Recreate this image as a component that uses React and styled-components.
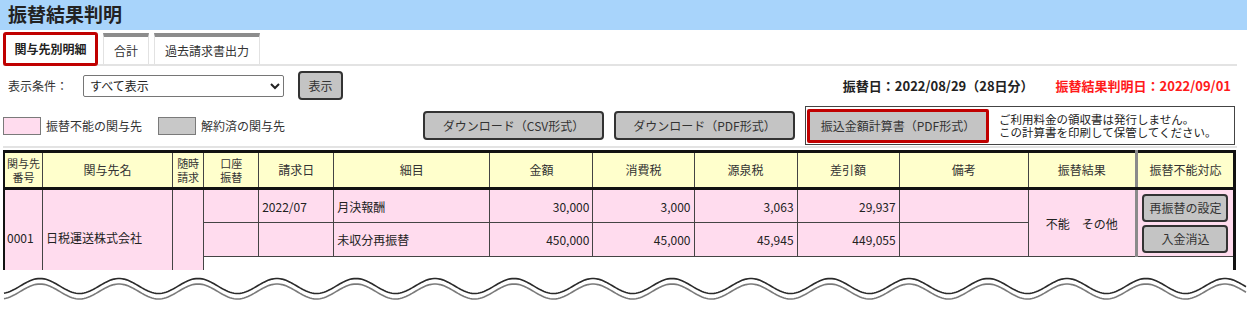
import React from 'react';
import styled, { createGlobalStyle } from 'styled-components';

const GlobalStyle = createGlobalStyle`
  html, body { margin: 0; padding: 0; background: #fff; }
  body {
    font-family: "Noto Sans CJK JP", "Noto Sans", sans-serif;
    font-size: 12px;
    color: #333;
  }
  * { box-sizing: border-box; }
`;

const TitleBar = styled.header`
  height: 30px;
  background: #a8d4fb;
  padding-left: 8px;
  font-size: 19px;
  font-weight: 700;
  line-height: 28px;
  color: #222;
`;

const Content = styled.div`
  padding: 0 10px 0 3px;
`;

const TabBar = styled.nav`
  display: flex;
  align-items: flex-end;
  gap: 5px;
  height: 36px;
  border-bottom: 2px solid #e3e3e3;
`;

const Tab = styled.div`
  display: flex;
  align-items: center;
  justify-content: center;
  background: #fff;
  font-size: 12px;
  line-height: 1;
  ${({ $active }) =>
    $active
      ? `
    height: 34px;
    margin-bottom: -2px;
    padding: 0 8.5px;
    border: 3px solid #c00000;
    border-radius: 3px;
    font-weight: 700;
    color: #222;
  `
      : `
    height: 31px;
    padding: 0 10px;
    border: 1px solid #e2e2e2;
    border-top: 4px solid #8c8c8c;
    border-bottom: none;
    color: #333;
  `}
`;

const FilterRow = styled.div`
  display: flex;
  align-items: center;
  height: 29px;
  margin-top: 5px;
`;

const FilterLabel = styled.span`
  padding-left: 5px;
  width: 80px;
  font-size: 12px;
`;

const Select = styled.select`
  width: 201px;
  height: 22px;
  font-family: inherit;
  font-size: 12px;
  color: #222;
  border: 1px solid #767676;
  border-radius: 2px;
  background: #fff;
  padding: 0 2px;
`;

const GrayButton = styled.button`
  display: flex;
  align-items: center;
  justify-content: center;
  width: ${({ $w }) => $w}px;
  height: ${({ $h }) => $h || 29}px;
  margin-left: ${({ $ml }) => $ml || 0}px;
  padding: 0;
  font-family: inherit;
  font-size: 12px;
  color: #333;
  background: #c4c4c4;
  border: 2px solid #333;
  border-radius: 4px;
`;

const DateInfo = styled.div`
  margin-left: auto;
  margin-right: 6px;
  display: flex;
  gap: 22px;
  font-size: 13px;
  font-weight: 700;
  color: #222;
`;

const RedText = styled.span`
  color: #ff1a1a;
`;

const Toolbar = styled.div`
  display: flex;
  align-items: center;
  justify-content: space-between;
  height: 41px;
  margin-top: 7px;
  padding-bottom: 2px;
  border-bottom: 2px solid #e3e3e3;
`;

const Legend = styled.div`
  display: flex;
  align-items: center;
`;

const Swatch = styled.span`
  width: 38px;
  height: 18px;
  background: ${({ $color }) => $color};
  border: 1.5px solid #7a7a7a;
  margin-right: 5px;
`;

const LegendText = styled.span`
  font-size: 12px;
  margin-right: ${({ $mr }) => $mr || 0}px;
`;

const Actions = styled.div`
  display: flex;
  align-items: center;
  gap: 10px;
  margin-right: 2px;
`;

const NoticeBox = styled.div`
  display: flex;
  align-items: center;
  width: 430px;
  height: 39px;
  padding: 0 1px;
  border: 1px solid #444;
`;

const RedButton = styled.button`
  width: 182px;
  height: 34px;
  padding: 0;
  font-family: inherit;
  font-size: 12px;
  color: #333;
  background: #c4c4c4;
  border: 3px solid #c00000;
  border-radius: 2px;
`;

const Notice = styled.div`
  margin-left: 10px;
  display: flex;
  flex-direction: column;
  font-size: 11.5px;
  color: #222;
  white-space: nowrap;
`;

const NoticeLine = styled.span`
  display: block;
  height: 12.5px;
  line-height: 12.5px;
  overflow: visible;
`;

const TableClip = styled.div`
  margin-top: 2px;
  height: 120px;
  overflow: hidden;
`;

const Table = styled.table`
  width: 1234px;
  margin-left: -1px;
  border-collapse: collapse;
  table-layout: fixed;
  border: 3px solid #111;
`;

const Th = styled.th`
  height: 37px;
  padding: 0;
  background: #ffffcc;
  border: 1px solid #444;
  border-bottom: 3px solid #111;
  font-weight: 400;
  font-size: ${({ $small }) => ($small ? 11 : 12)}px;
  line-height: ${({ $small }) => ($small ? 14 : 16)}px;
  color: #333;
  text-align: center;
  ${({ $sep }) => ($sep ? 'border-left: 3px solid #8a8a8a;' : '')}
`;

const Td = styled.td`
  height: 34px;
  padding: 0 ${({ $pad }) => ($pad === undefined ? 3 : $pad)}px;
  background: #ffdcee;
  border: 1px solid #444;
  font-size: 12px;
  color: #222;
  text-align: ${({ $align }) => $align || 'left'};
  white-space: nowrap;
  ${({ $sep }) => ($sep ? 'border-left: 3px solid #8a8a8a;' : '')}
`;

const BlankTd = styled.td`
  height: 30px;
  background: #fff;
  border: none;
  border-top: 1px solid #444;
`;

const ButtonStack = styled.div`
  display: flex;
  flex-direction: column;
  align-items: center;
  gap: 3px;
`;

const WaveSvg = styled.svg`
  display: block;
  width: 1247px;
  height: 40px;
`;

const colWidths = [39, 130, 31, 55, 75, 156, 103, 101, 103, 102, 129, 108, 98];

function wavePath(offset) {
  const pts = [];
  for (let x = 4; x <= 1247; x += 2) {
    const y = 16 + offset - 7.5 * Math.cos((2 * Math.PI * (x - 40)) / 79);
    pts.push(`${x === 4 ? 'M' : 'L'}${x} ${y.toFixed(2)}`);
  }
  return pts.join(' ');
}

export default function App() {
  return (
    <>
      <GlobalStyle />
      <TitleBar>振替結果判明</TitleBar>
      <Content>
        <TabBar>
          <Tab $active>関与先別明細</Tab>
          <Tab>合計</Tab>
          <Tab>過去請求書出力</Tab>
        </TabBar>

        <FilterRow>
          <FilterLabel>表示条件：</FilterLabel>
          <Select defaultValue="all">
            <option value="all">すべて表示</option>
          </Select>
          <GrayButton $w={45} $ml={14}>表示</GrayButton>
          <DateInfo>
            <span>振替日：2022/08/29（28日分）</span>
            <RedText>振替結果判明日：2022/09/01</RedText>
          </DateInfo>
        </FilterRow>

        <Toolbar>
          <Legend>
            <Swatch $color="#ffdcee" />
            <LegendText $mr={16}>振替不能の関与先</LegendText>
            <Swatch $color="#c8c8c8" />
            <LegendText>解約済の関与先</LegendText>
          </Legend>
          <Actions>
            <GrayButton $w={181}>ダウンロード（CSV形式）</GrayButton>
            <GrayButton $w={181}>ダウンロード（PDF形式）</GrayButton>
            <NoticeBox>
              <RedButton>振込金額計算書（PDF形式）</RedButton>
              <Notice>
                <NoticeLine>ご利用料金の領収書は発行しません。</NoticeLine>
                <NoticeLine>この計算書を印刷して保管してください。</NoticeLine>
              </Notice>
            </NoticeBox>
          </Actions>
        </Toolbar>

        <TableClip>
          <Table>
            <colgroup>
              {colWidths.map((w, i) => (
                <col key={i} style={{ width: w }} />
              ))}
            </colgroup>
            <thead>
              <tr>
                <Th $small>関与先<br />番号</Th>
                <Th>関与先名</Th>
                <Th $small>随時<br />請求</Th>
                <Th $small>口座<br />振替</Th>
                <Th>請求日</Th>
                <Th>細目</Th>
                <Th>金額</Th>
                <Th>消費税</Th>
                <Th>源泉税</Th>
                <Th>差引額</Th>
                <Th>備考</Th>
                <Th>振替結果</Th>
                <Th $sep>振替不能対応</Th>
              </tr>
            </thead>
            <tbody>
              <tr>
                <Td rowSpan={3} $pad={2}>0001</Td>
                <Td rowSpan={3}>日税運送株式会社</Td>
                <Td rowSpan={3} />
                <Td />
                <Td>2022/07</Td>
                <Td>月決報酬</Td>
                <Td $align="right">30,000</Td>
                <Td $align="right">3,000</Td>
                <Td $align="right">3,063</Td>
                <Td $align="right">29,937</Td>
                <Td />
                <Td rowSpan={2} $align="center">不能　その他</Td>
                <Td rowSpan={2} $sep $pad={0}>
                  <ButtonStack>
                    <GrayButton $w={86} $h={28}>再振替の設定</GrayButton>
                    <GrayButton $w={86} $h={28}>入金消込</GrayButton>
                  </ButtonStack>
                </Td>
              </tr>
              <tr>
                <Td />
                <Td />
                <Td>未収分再振替</Td>
                <Td $align="right">450,000</Td>
                <Td $align="right">45,000</Td>
                <Td $align="right">45,945</Td>
                <Td $align="right">449,055</Td>
                <Td />
              </tr>
              <tr>
                <BlankTd colSpan={10} />
              </tr>
            </tbody>
          </Table>
        </TableClip>
      </Content>
      <WaveSvg viewBox="0 0 1247 40">
        <path d={wavePath(0)} fill="none" stroke="#2a2a2a" strokeWidth="1.6" />
        <path d={wavePath(5.5)} fill="none" stroke="#7a7a7a" strokeWidth="1.6" />
      </WaveSvg>
    </>
  );
}
